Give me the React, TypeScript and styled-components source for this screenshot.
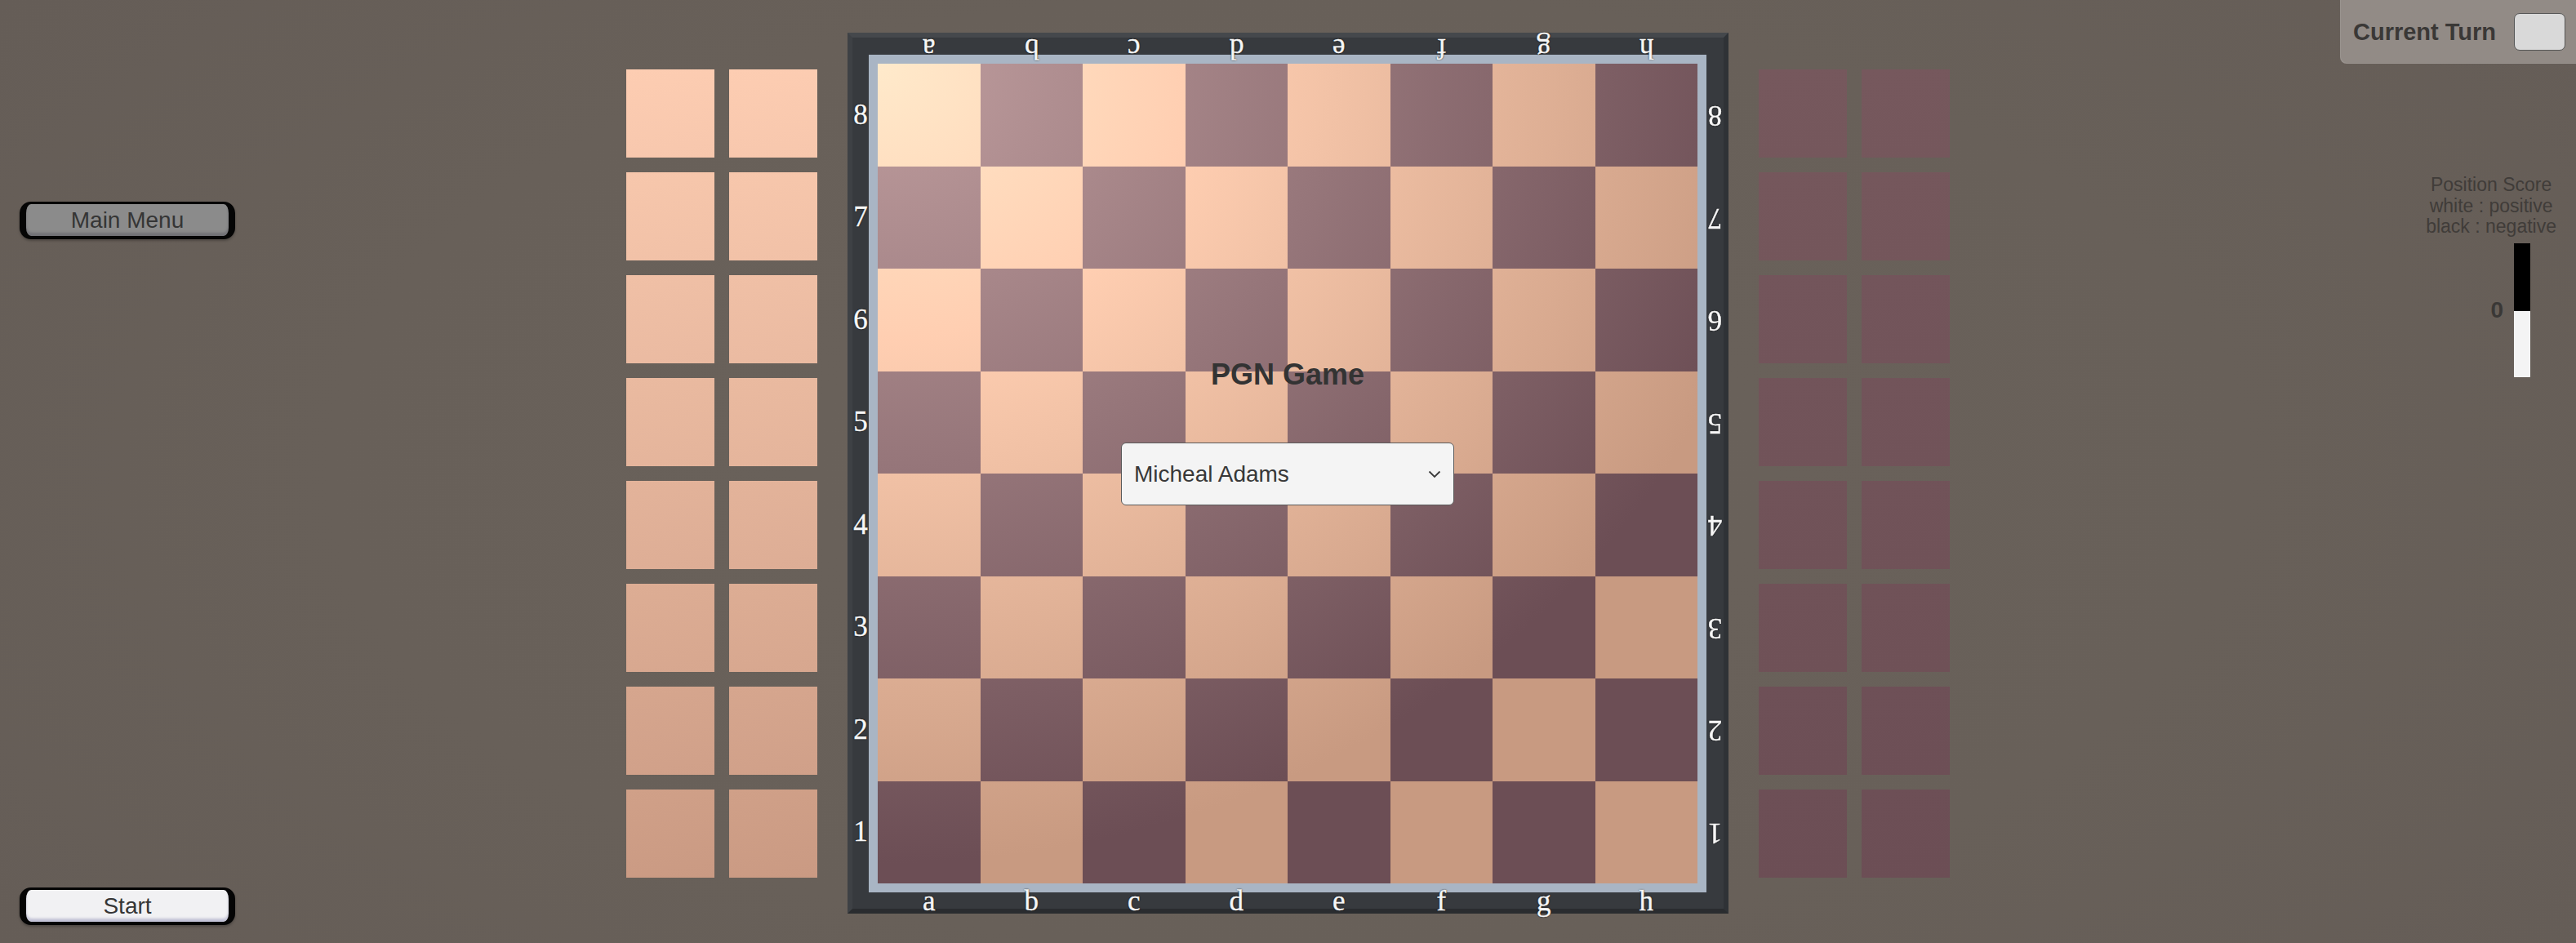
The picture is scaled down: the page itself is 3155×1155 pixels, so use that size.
import React from "react";
import styled, { createGlobalStyle } from "styled-components";

const FILES = ["a", "b", "c", "d", "e", "f", "g", "h"];
const RANKS = [8, 7, 6, 5, 4, 3, 2, 1];

const LIGHT_TOP = [253, 205, 178];
const LIGHT_BOTTOM = [202, 154, 131];
const DARK_TOP = [118, 88, 93];
const DARK_BOTTOM = [108, 78, 85];

const mix = (a: number[], b: number[], t: number) =>
  `rgb(${a.map((v, i) => Math.round(v + (b[i] - v) * t)).join(",")})`;

export default function App() {
  return (
    <>
      <GlobalStyle />
      <Screen>
        <LeftSide>
          <MenuButton>Main Menu</MenuButton>
          <MenuButton $light>Start</MenuButton>
        </LeftSide>

        <Center>
          <Captured tone="light" />
          <Frame>
            <FileRow $row={1}>
              {FILES.map((f) => (
                <Coord key={f} $flipped $shift={-3}>{f}</Coord>
              ))}
            </FileRow>
            <RankColumn $col={1}>
              {RANKS.map((r) => (
                <Coord key={r}>{r}</Coord>
              ))}
            </RankColumn>
            <Rim>
              <Surface>
                <Squares>
                  {RANKS.map((r, ri) =>
                    FILES.map((f, fi) => (
                      <Square key={f + r} $dark={(ri + fi) % 2 === 1} />
                    ))
                  )}
                </Squares>
                <Overlay>
                  <Title>PGN Game</Title>
                  <Dropdown>
                    <span>Micheal Adams</span>
                    <svg width="16" height="10" viewBox="0 0 16 10">
                      <polyline points="1.5,1.5 8,8 14.5,1.5" fill="none" stroke="#3a3a3a" strokeWidth="1.8" />
                    </svg>
                  </Dropdown>
                </Overlay>
              </Surface>
            </Rim>
            <RankColumn $col={3}>
              {RANKS.map((r) => (
                <Coord key={r} $flipped>{r}</Coord>
              ))}
            </RankColumn>
            <FileRow $row={3}>
              {FILES.map((f) => (
                <Coord key={f} $shift={1}>{f}</Coord>
              ))}
            </FileRow>
          </Frame>
          <Captured tone="dark" />
        </Center>

        <RightSide>
          <TurnPanel>
            <TurnLabel>Current Turn</TurnLabel>
            <TurnSwatch />
          </TurnPanel>
          <Score>
            <Legend>
              Position Score
              <br />
              white : positive
              <br />
              black : negative
            </Legend>
            <MeterRow>
              <MeterValue>0</MeterValue>
              <Meter>
                <MeterBlack />
                <MeterWhite />
              </Meter>
            </MeterRow>
          </Score>
        </RightSide>
      </Screen>
    </>
  );
}

function Captured({ tone }: { tone: "light" | "dark" }) {
  return (
    <CapturedGrid>
      {Array.from({ length: 16 }, (_, i) => (
        <CapturedSlot key={i} $row={Math.floor(i / 2)} $tone={tone} />
      ))}
    </CapturedGrid>
  );
}

const GlobalStyle = createGlobalStyle`
  html, body {
    margin: 0;
    padding: 0;
  }
  body {
    width: 3155px;
    height: 1155px;
    overflow: hidden;
    background: radial-gradient(ellipse 62% 85% at 50% 50%, #6a625b 0%, #686059 60%, #655d57 100%);
    font-family: "Liberation Sans", Arial, sans-serif;
  }
`;

const Screen = styled.div`
  display: grid;
  grid-template-columns: 1fr auto 1fr;
  height: 1155px;
`;

const LeftSide = styled.aside`
  display: flex;
  flex-direction: column;
  justify-content: space-between;
  align-items: flex-start;
  padding: 247px 0 22px 24px;
`;

const MenuButton = styled.button<{ $light?: boolean }>`
  width: 264px;
  height: 46px;
  box-sizing: border-box;
  border-style: solid;
  border-color: #050505;
  border-width: 3px 8px 4px;
  border-radius: 14px;
  background: ${(p) => (p.$light ? "#f1f1f3" : "#8b8b8b")};
  box-shadow: inset 0 -4px 3px ${(p) => (p.$light ? "rgba(110, 110, 160, 0.35)" : "rgba(40, 40, 60, 0.25)")},
    0 2px 3px rgba(0, 0, 0, 0.25);
  color: #353535;
  font-family: "Liberation Sans", Arial, sans-serif;
  font-size: 28px;
  line-height: 1;
  padding: 0;
  cursor: pointer;
`;

const Center = styled.main`
  display: flex;
  align-items: center;
  align-self: start;
  gap: 37px;
  padding-top: 40px;
`;

const CapturedGrid = styled.div`
  display: grid;
  grid-template-columns: repeat(2, 108px);
  grid-auto-rows: 108px;
  gap: 18px;
`;

const CapturedSlot = styled.div<{ $row: number; $tone: "light" | "dark" }>`
  background: ${(p) => {
    const top = p.$tone === "light" ? LIGHT_TOP : DARK_TOP;
    const bottom = p.$tone === "light" ? LIGHT_BOTTOM : DARK_BOTTOM;
    const t0 = (p.$row * 126) / 990;
    const t1 = (p.$row * 126 + 108) / 990;
    return `linear-gradient(170deg, ${mix(top, bottom, t0)}, ${mix(top, bottom, t1)})`;
  }};
`;

const Frame = styled.div`
  display: grid;
  grid-template-columns: 20px auto 21px;
  grid-template-rows: 21px auto 20px;
  border-style: solid;
  border-width: 6px;
  border-color: #45484c #2f3236 #2a2c2f #3e4145;
  background: #373a3e;
`;

const FileRow = styled.div<{ $row: number }>`
  grid-column: 2;
  grid-row: ${(p) => p.$row};
  display: grid;
  grid-template-columns: repeat(8, 1fr);
  padding: 0 11px;
`;

const RankColumn = styled.div<{ $col: number }>`
  grid-column: ${(p) => p.$col};
  grid-row: 2;
  display: grid;
  grid-template-rows: repeat(8, 1fr);
  padding: 11px 0;
`;

const Coord = styled.span<{ $flipped?: boolean; $shift?: number }>`
  display: flex;
  align-items: center;
  justify-content: center;
  font-family: "Liberation Serif", "Times New Roman", serif;
  font-size: 35px;
  line-height: 20px;
  color: #f6f6f6;
  text-shadow: 0 0 1px #111, 0 0 2px rgba(0, 0, 0, 0.9);
  -webkit-text-stroke: 0.4px #f6f6f6;
  transform: ${(p) => (p.$flipped ? "rotate(180deg) " : "")}translateY(${(p) => p.$shift ?? 0}px);
`;

const Rim = styled.div`
  grid-column: 2;
  grid-row: 2;
  padding: 11px;
  background: #a9b5c4;
`;

const Surface = styled.div`
  position: relative;
`;

const Squares = styled.div`
  display: grid;
  grid-template-columns: repeat(8, 125.5px);
  grid-template-rows: repeat(8, 125.5px);
  isolation: isolate;
  background: radial-gradient(ellipse 1120px 980px at 0px 0px, rgb(84, 80, 74) 0%, rgb(0, 0, 0) 100%);
`;

const Square = styled.div<{ $dark: boolean }>`
  background: ${(p) => (p.$dark ? "#6c4e55" : "#c89a81")};
  mix-blend-mode: plus-lighter;
`;

const Overlay = styled.div`
  position: absolute;
  inset: 0;
  display: flex;
  flex-direction: column;
  align-items: center;
  padding-top: 360px;
`;

const Title = styled.h2`
  margin: 0;
  font-size: 36px;
  line-height: 42px;
  font-weight: 700;
  color: #333;
`;

const Dropdown = styled.div`
  width: 408px;
  height: 77px;
  box-sizing: border-box;
  margin-top: 62px;
  display: flex;
  align-items: center;
  justify-content: space-between;
  padding: 0 15px 0 15px;
  background: #f4f4f4;
  border: 1.5px solid #5a5a5a;
  border-radius: 6px;
  font-size: 28px;
  color: #383838;
`;

const RightSide = styled.aside`
  display: flex;
  flex-direction: column;
  align-items: flex-end;
`;

const TurnPanel = styled.div`
  width: 289px;
  height: 78px;
  box-sizing: border-box;
  display: flex;
  align-items: center;
  justify-content: space-between;
  padding: 0 13px 0 16px;
  background: #928b86;
  border-bottom-left-radius: 8px;
  box-shadow: inset 1px -1px 0 rgba(255, 255, 255, 0.08);
`;

const TurnLabel = styled.span`
  font-size: 29px;
  font-weight: 700;
  color: #3a3836;
`;

const TurnSwatch = styled.div`
  width: 63px;
  height: 46px;
  box-sizing: border-box;
  background: #d9d9d9;
  border: 1.5px solid #555;
  border-radius: 7px;
`;

const Score = styled.div`
  display: flex;
  flex-direction: column;
  align-items: flex-end;
  margin: 136px 24px 0 0;
`;

const Legend = styled.div`
  font-size: 23px;
  line-height: 25.5px;
  text-align: center;
  color: #403c39;
`;

const MeterRow = styled.div`
  display: flex;
  align-items: center;
  gap: 13px;
  margin: 7px 32px 0 0;
`;

const MeterValue = styled.span`
  font-size: 28px;
  font-weight: 700;
  color: #3a3836;
`;

const Meter = styled.div`
  display: flex;
  flex-direction: column;
  width: 20px;
`;

const MeterBlack = styled.div`
  height: 83px;
  background: #000;
`;

const MeterWhite = styled.div`
  height: 81px;
  background: #f4f4f4;
`;
